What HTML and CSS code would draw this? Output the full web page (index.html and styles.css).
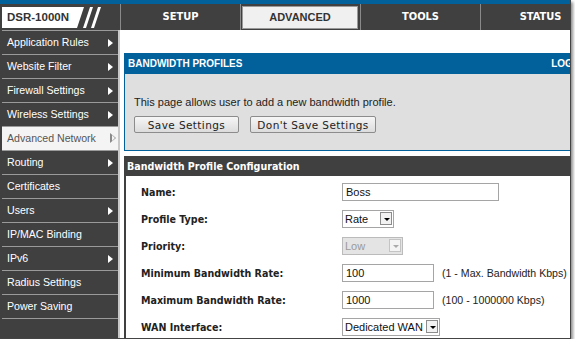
FILE: index.html
```html
<!DOCTYPE html>
<html lang="en">
<head>
    <meta charset="UTF-8">
    <title>DSR-1000N - Bandwidth Profiles</title>
    <link rel="stylesheet" href="styles.css">
</head>
<body>
<div class="frame">
    <div class="topline"></div>
    <div class="nav">
        <div class="logo">DSR-1000N</div>
        <svg class="slashes" width="43" height="26" viewBox="0 0 43 26">
            <polygon points="0,3 7,3 0,24" fill="#fff"/>
            <polygon points="13,3 16,3 9,24 6,24" fill="#fff"/>
            <polygon points="21,3 24,3 17,24 14,24" fill="#fff"/>
        </svg>
        <div class="tab">SETUP</div>
        <div class="tab active"><span>ADVANCED</span></div>
        <div class="tab">TOOLS</div>
        <div class="tab">STATUS</div>
    </div>
    <div class="content">
        <ul class="side">
            <li class="sub">Application Rules</li>
            <li class="sub">Website Filter</li>
            <li class="sub">Firewall Settings</li>
            <li class="sub">Wireless Settings</li>
            <li class="sub current">Advanced Network</li>
            <li class="sub">Routing</li>
            <li>Certificates</li>
            <li class="sub">Users</li>
            <li>IP/MAC Binding</li>
            <li class="sub">IPv6</li>
            <li>Radius Settings</li>
            <li>Power Saving</li>
            <li class="empty"></li>
        </ul>
        <div class="main">
            <div class="panel">
                <div class="panel-head">
                    <span>BANDWIDTH PROFILES</span>
                    <span>LOGOUT</span>
                </div>
                <div class="panel-body">
                    <p>This page allows user to add a new bandwidth profile.</p>
                    <div class="buttons">
                        <button class="btn save">Save Settings</button>
                        <button class="btn">Don't Save Settings</button>
                    </div>
                </div>
            </div>
            <div class="config">
                <div class="config-head">Bandwidth Profile Configuration</div>
                <div class="row">
                    <label>Name:</label>
                    <input class="field name" type="text" value="Boss">
                </div>
                <div class="row">
                    <label>Profile Type:</label>
                    <div class="select rate">Rate<span class="drop"></span></div>
                </div>
                <div class="row">
                    <label>Priority:</label>
                    <div class="select low disabled">Low<span class="drop"></span></div>
                </div>
                <div class="row">
                    <label>Minimum Bandwidth Rate:</label>
                    <input class="field num" type="text" value="100">
                    <span class="hint">(1 - Max. Bandwidth Kbps)</span>
                </div>
                <div class="row">
                    <label>Maximum Bandwidth Rate:</label>
                    <input class="field num" type="text" value="1000">
                    <span class="hint">(100 - 1000000 Kbps)</span>
                </div>
                <div class="row">
                    <label>WAN Interface:</label>
                    <div class="select wan">Dedicated WAN<span class="drop"></span></div>
                </div>
            </div>
        </div>
    </div>
</div>
</body>
</html>
```

FILE: styles.css
```css
html, body {
    margin: 0;
    background: #fff;
}

* {
    font-family: "Liberation Sans", Arial, sans-serif;
    box-sizing: border-box;
}

.frame {
    width: 571px;
    height: 339px;
    overflow: hidden;
    border-right: 1px solid #444;
    border-bottom: 1px solid #444;
    box-shadow: 2px 2px 3px rgba(0, 0, 0, 0.45);
    background: #fff;
}

.topline {
    height: 4px;
    background: #02609a;
}

/* top navigation */
.nav {
    height: 26px;
    background: #404040;
    display: flex;
}

.logo {
    flex: none;
    width: 75px;
    margin: 3px 0 2px 2px;
    background: #fff;
    color: #333;
    font-weight: bold;
    font-size: 11.5px;
    line-height: 21px;
    padding-left: 5px;
    white-space: nowrap;
}

.slashes {
    flex: none;
}

.tab {
    width: 120px;
    flex: none;
    border-left: 1px solid #8a8a8a;
    color: #fff;
    font-family: "DejaVu Sans Condensed", "DejaVu Sans", sans-serif;
    font-weight: bold;
    font-size: 11px;
    text-align: center;
    line-height: 26px;
}

.tab.active {
    padding: 2px 2px 1px 1px;
}

.tab.active span {
    display: block;
    height: 23px;
    line-height: 21px;
    background: #f0f0f0;
    border: 1px solid #999;
    color: #333;
}

/* side menu */
.content {
    display: flex;
    height: 309px;
}

.side {
    list-style: none;
    margin: 0;
    padding: 0 0 0 2px;
    width: 120px;
    background: #404040;
    border-right: 2px solid #c8c8c8;
    flex: none;
}

.side li {
    height: 24px;
    border-top: 1px solid #9a9a9a;
    color: #fff;
    font-size: 10.6px;
    line-height: 23px;
    padding-left: 5px;
    position: relative;
}

.side li.sub::after {
    content: "";
    position: absolute;
    right: 5px;
    top: 8px;
    border-left: 5px solid #fff;
    border-top: 4px solid transparent;
    border-bottom: 4px solid transparent;
}

.side li.current {
    background: #f4f4f4;
    color: #555;
}

.side li.current::after {
    right: 2px;
    top: 6px;
    border-left: 6px solid #8a8a8a;
    border-top: 5px solid transparent;
    border-bottom: 5px solid transparent;
}

.side li.current::before {
    content: "";
    position: absolute;
    right: 3px;
    top: 8px;
    border-left: 3px solid #f4f4f4;
    border-top: 3px solid transparent;
    border-bottom: 3px solid transparent;
    z-index: 1;
}

.side li.empty {
    height: 20px;
}

/* main area */
.main {
    flex: none;
    width: 480px;
    padding: 23px 0 0 4px;
}

.panel {
    width: 477px;
    border: 1px solid #02609a;
}

.panel-head {
    height: 20px;
    background: #02609a;
    color: #fff;
    font-family: "DejaVu Sans Condensed", "DejaVu Sans", sans-serif;
    font-weight: bold;
    font-size: 10px;
    line-height: 20px;
    padding: 0 6px 0 3px;
    display: flex;
    justify-content: space-between;
}

.panel-body {
    background: #dfdfdf;
    height: 76px;
    padding: 21px 0 0 9px;
}

.panel-body p {
    margin: 0;
    font-size: 11px;
    color: #222;
    line-height: 14px;
}

.buttons {
    display: flex;
    gap: 11px;
    margin-top: 7px;
}

.btn {
    height: 17px;
    padding: 0;
    background: linear-gradient(#f6f6f6, #dcdcdc);
    border: 1px solid #8c8c8c;
    border-radius: 2px;
    font-family: "DejaVu Sans", sans-serif;
    font-size: 10.5px;
    letter-spacing: 0.4px;
    color: #222;
    width: 105px;
}

.btn + .btn {
    width: 126px;
}

.config {
    margin-top: 5px;
    width: 470px;
    border-left: 2px solid #404040;
    height: 200px;
}

.config-head {
    height: 20px;
    background: #404040;
    color: #fff;
    font-family: "DejaVu Sans Condensed", "DejaVu Sans", sans-serif;
    font-weight: bold;
    font-size: 10.6px;
    line-height: 20px;
    padding-left: 3px;
    margin-left: -2px;
}

.row {
    height: 27px;
    display: flex;
    align-items: center;
    padding-left: 15px;
}

.config-head + .row {
    margin-top: 2px;
}

.row label {
    width: 201px;
    flex: none;
    font-family: "DejaVu Sans Condensed", "DejaVu Sans", sans-serif;
    font-weight: bold;
    font-size: 10.6px;
    color: #222;
}

.field {
    height: 18px;
    border: 1px solid #a5a5a5;
    font-size: 11px;
    padding: 0 3px;
    color: #111;
    margin: 0;
}

.field.name {
    width: 157px;
}

.field.num {
    width: 92px;
}

.hint {
    margin-left: 8px;
    font-size: 10.6px;
    color: #222;
    white-space: nowrap;
}

.select {
    height: 18px;
    border: 1px solid #a5a5a5;
    background: #fff;
    font-size: 11px;
    color: #111;
    line-height: 16px;
    padding-left: 2px;
    display: flex;
    justify-content: space-between;
    align-items: center;
    padding-right: 1px;
}

.select.rate {
    width: 52px;
}

.select.low {
    width: 61px;
}

.select.wan {
    width: 98px;
}

.select .drop {
    width: 12px;
    height: 13px;
    border: 1px solid #8c8c8c;
    background: #f2f2f2;
    position: relative;
}

.select .drop::after {
    content: "";
    position: absolute;
    left: 3px;
    top: 5px;
    border-top: 3px solid #000;
    border-left: 3px solid transparent;
    border-right: 3px solid transparent;
}

.select.disabled {
    background: #e4e4e4;
    color: #9a9a9a;
    border-color: #bbb;
}

.select.disabled .drop {
    border-color: #c4c4c4;
    background: #f4f4f4;
}

.select.disabled .drop::after {
    border-top-color: #aaa;
}
```
